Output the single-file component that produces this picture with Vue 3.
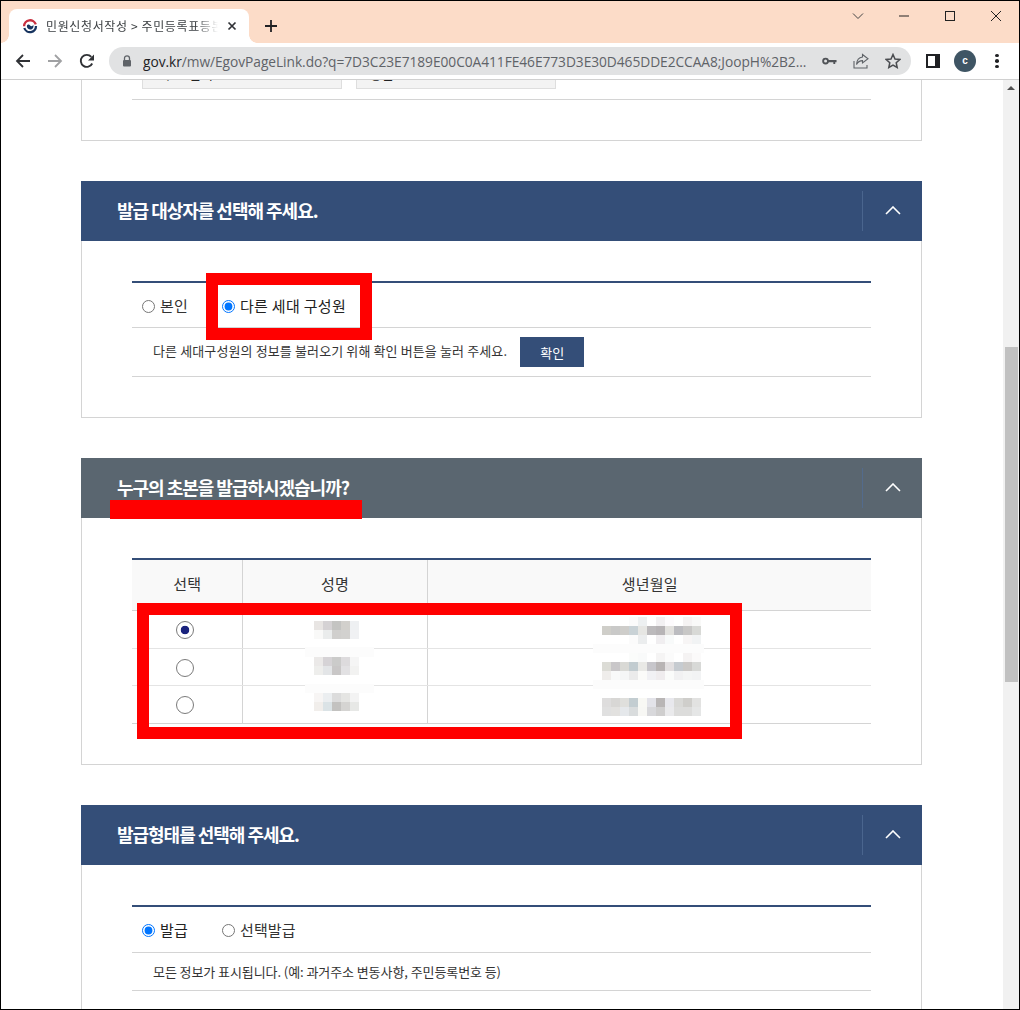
<script setup>
const rows = [
  { checked: true },
  { checked: false },
  { checked: false },
]

// Each mosaic: top-left position on the screen and its rows of 9px blocks
const mosaics = [
  { x: 314, y: 621, cols: 5, c: ['#e8e5e3','#d5d2d4','#c4c4c2','#d2d0cc','#eef0f2','#f9f9f8','#eaecec','#d0cfcd','#d2d1cf','#f0f1f3'] },
  { x: 314, y: 657, cols: 5, c: ['#ebe9e8','#d6d3d6','#cbcbca','#dddbdd','#f5f5f5','#eeeeec','#e3e5e7','#c9c7c7','#e2e1e3','#f2f2f1'] },
  { x: 314, y: 693, cols: 5, c: ['#f7f5f4','#ebeef0','#dcdcdc','#e5e5e3','#f3f3f3','#f1eeeb','#dbe3e6','#c3c2c0','#d5d4d2','#e7e8e6'] },
  { x: 602, y: 617, cols: 11, c: ['#fff','#fff','#fff','#fbfbfb','#edf0f1','#fff','#f2f0f2','#fdfbfd','#fff','#f5f3f3','#f9f9f8',
    '#cfcec9','#c9c9c8','#cecdca','#c9d2d6','#e6e6e3','#bcbabc','#b7b4b6','#e2e1de','#bcbcc0','#c8c7c6','#d8d9d6',
    '#fff','#fff','#fff','#fbfbfb','#ebedee','#fff','#f0eef0','#f8fafa','#fff','#f7f5f5','#f1f3f4'] },
  { x: 602, y: 653, cols: 11, c: ['#fff','#fff','#fff','#fbfcfb','#f9fafa','#fff','#f5f4f4','#fbfbfb','#fff','#f5f3f3','#fbfafa',
    '#dcdcd6','#c9c7c9','#d9d9d5','#c2ccd0','#e9e9e6','#c7c6cb','#b8b4b4','#e2dfe0','#c6cbd0','#cbc9c7','#d8d9d7',
    '#efedeb','#f8f9f9','#f5f6f6','#ebebeb','#fbfbf9','#f1f1f4','#efecee','#fafbfa','#f1f1f2','#f4f5f5','#f2f3f4'] },
  { x: 602, y: 698, cols: 11, c: ['#dedddd','#d8d7d5','#dfdfdc','#c3cdd1','#f8f8f4','#e3e3e9','#b9b6b6','#e8e8ed','#d9d9d7','#cfcecb','#e2e2e1',
    '#e0e0e0','#e2e1df','#e5e8eb','#d9dcdd','#f7f7f4','#d8d8db','#cfcece','#eaeaec','#dcdcdb','#dcdcdb','#e5e6e6'] },
]

const blockStyle = (m) => ({
  left: m.x + 'px',
  top: m.y + 'px',
  gridTemplateColumns: `repeat(${m.cols}, 9px)`,
})

const halos = [
  { x: 305, y: 647, w: 69, h: 10 },
  { x: 305, y: 684, w: 69, h: 9 },
  { x: 593, y: 644, w: 111, h: 9 },
  { x: 593, y: 680, w: 111, h: 9 },
]
</script>

<template>
  <div class="window">
    <!-- tab strip -->
    <header class="tabstrip">
      <div class="tab">
        <svg class="favicon" viewBox="0 0 16 16" width="16" height="16">
          <path d="M2.1 8.2A6 6 0 0 1 13.8 6.4" fill="none" stroke="#c8303f" stroke-width="2.3" />
          <path d="M14 8A6 6 0 0 1 2.3 10" fill="none" stroke="#17345f" stroke-width="2.3" />
          <path d="M5 7.3C6 6 7.4 6.8 8.4 7.8 9.4 8.7 11 8.2 11.2 6.8 12.2 9.6 10.2 11.8 8 11.6 5.8 11.4 4.4 9.2 5 7.3Z" fill="#17345f" />
        </svg>
        <span class="tab-title">민원신청서작성 &gt; 주민등록표등본</span>
        <svg class="tab-close" viewBox="0 0 10 10" width="10" height="10">
          <path d="M1.5 1.5l7 7M8.5 1.5l-7 7" stroke="#303236" stroke-width="1.7" fill="none" />
        </svg>
      </div>
      <svg class="newtab" viewBox="0 0 12 12" width="12" height="12">
        <path d="M6 0v12M0 6h12" stroke="#202124" stroke-width="1.8" />
      </svg>
      <div class="winctl">
        <span class="ctl">
          <svg viewBox="0 0 12 8" width="12" height="8"><path d="M1 1.5l5 5 5-5" fill="none" stroke="#444" stroke-width="1" /></svg>
        </span>
        <span class="ctl">
          <svg viewBox="0 0 12 12" width="12" height="12"><path d="M1 6h10" stroke="#222" stroke-width="1" /></svg>
        </span>
        <span class="ctl">
          <svg viewBox="0 0 12 12" width="12" height="12"><rect x="1.5" y="1.5" width="9" height="9" fill="none" stroke="#222" stroke-width="1" /></svg>
        </span>
        <span class="ctl">
          <svg viewBox="0 0 12 12" width="12" height="12"><path d="M1 1l10 10M11 1L1 11" stroke="#222" stroke-width="1" /></svg>
        </span>
      </div>
    </header>

    <!-- toolbar -->
    <nav class="toolbar">
      <span class="navbtn">
        <svg viewBox="0 0 16 16" width="16" height="16"><path d="M15 8H2M8 2L2 8l6 6" fill="none" stroke="#303236" stroke-width="1.8" /></svg>
      </span>
      <span class="navbtn">
        <svg viewBox="0 0 16 16" width="16" height="16"><path d="M1 8h13M8 2l6 6-6 6" fill="none" stroke="#a0a1a3" stroke-width="1.8" /></svg>
      </span>
      <span class="navbtn">
        <svg viewBox="0 0 16 16" width="16" height="16"><path d="M13.2 10.5A6 6 0 1 1 12.3 3.9" fill="none" stroke="#303236" stroke-width="1.9" /><path d="M15 1.4v6h-6z" fill="#303236" /></svg>
      </span>
      <div class="omnibox">
        <svg class="lock" viewBox="0 0 10 12" width="10" height="12">
          <path d="M2.5 5V3.3a2.5 2.5 0 0 1 5 0V5" fill="none" stroke="#5f6368" stroke-width="1.3" />
          <rect x="1" y="5" width="8" height="6.5" rx="1" fill="#5f6368" />
        </svg>
        <span class="url"><b>gov.kr</b>/mw/EgovPageLink.do?q=7D3C23E7189E00C0A411FE46E773D3E30D465DDE2CCAA8;JoopH%2B2...</span>
        <svg class="om-key" viewBox="0 0 16 10" width="15" height="10">
          <circle cx="3.8" cy="5" r="2.6" fill="none" stroke="#505357" stroke-width="2" />
          <path d="M6 4h9.5v2.2h-1.4v2h-2v-2H6z" fill="#505357" />
        </svg>
        <svg class="om-share" viewBox="0 0 16 16" width="16" height="16">
          <path d="M1 8v7h13v-3" fill="none" stroke="#5f6368" stroke-width="1.1" />
          <path d="M9.5 1.5l5.5 4.3-5.5 4.2V7.6C7 7.6 5 8.6 3.5 11.5 3.8 7.5 6 4.4 9.5 4z" fill="none" stroke="#5f6368" stroke-width="1.1" />
        </svg>
        <svg class="om-star" viewBox="0 0 16 16" width="16" height="16">
          <path d="M8 1.5l2 4.5 4.8.5-3.6 3.2 1 4.8L8 12.1l-4.2 2.4 1-4.8L1.2 6.5 6 6z" fill="none" stroke="#4a4c50" stroke-width="1.5" />
        </svg>
      </div>
      <svg class="sidepanel" viewBox="0 0 14 14" width="14" height="14">
        <rect x="0" y="0" width="14" height="14" fill="#202124" />
        <rect x="2" y="2" width="7" height="10" fill="#fff" />
      </svg>
      <span class="avatar">c</span>
      <span class="kebab"><i></i><i></i><i></i></span>
    </nav>

    <!-- page -->
    <div class="viewport">
      <main class="page">
        <section class="card card-cut">
          <div class="cut-row">
            <div class="cut-box"><span>주소 선택</span></div>
            <div class="cut-box cut-box-b"><span>등본</span></div>
          </div>
        </section>

        <section class="card">
          <div class="card-head">
            <h2>발급 대상자를 선택해 주세요.</h2>
            <button class="fold" aria-label="접기">
              <svg viewBox="0 0 16 9" width="16" height="9"><path d="M1 8l7-7 7 7" fill="none" stroke="#fff" stroke-width="1.6" /></svg>
            </button>
          </div>
          <div class="card-body">
            <div class="radio-row">
              <label class="opt opt-first"><input type="radio" name="who" />본인</label>
              <label class="opt opt-on"><input type="radio" name="who" checked />다른 세대 구성원</label>
            </div>
            <div class="note-row">
              <span class="note-up">다른 세대구성원의 정보를 불러오기 위해 확인 버튼을 눌러 주세요.</span>
              <button class="confirm">확인</button>
            </div>
          </div>
        </section>

        <section class="card">
          <div class="card-head card-head-gray">
            <h2>누구의 초본을 발급하시겠습니까?</h2>
            <button class="fold" aria-label="접기">
              <svg viewBox="0 0 16 9" width="16" height="9"><path d="M1 8l7-7 7 7" fill="none" stroke="#fff" stroke-width="1.6" /></svg>
            </button>
          </div>
          <div class="card-body">
            <table class="people">
              <colgroup>
                <col class="c1" /><col class="c2" /><col />
              </colgroup>
              <thead>
                <tr><th>선택</th><th>성명</th><th>생년월일</th></tr>
              </thead>
              <tbody>
                <tr v-for="(r, i) in rows" :key="i">
                  <td><span class="pick" :class="{ on: r.checked }"></span></td>
                  <td></td>
                  <td></td>
                </tr>
              </tbody>
            </table>
          </div>
        </section>

        <section class="card card-last">
          <div class="card-head">
            <h2>발급형태를 선택해 주세요.</h2>
            <button class="fold" aria-label="접기">
              <svg viewBox="0 0 16 9" width="16" height="9"><path d="M1 8l7-7 7 7" fill="none" stroke="#fff" stroke-width="1.6" /></svg>
            </button>
          </div>
          <div class="card-body">
            <div class="radio-row radio-row-low">
              <label class="opt opt-first opt-on"><input type="radio" name="kind" checked />발급</label>
              <label class="opt opt-gap"><input type="radio" name="kind" />선택발급</label>
            </div>
            <div class="note-row note-row-short">
              <span>모든 정보가 표시됩니다. (예: 과거주소 변동사항, 주민등록번호 등)</span>
            </div>
          </div>
        </section>
      </main>

      <div class="scrollbar">
        <span class="arrow"></span>
        <span class="thumb"></span>
      </div>
    </div>

    <!-- pixelated personal data -->
    <div v-for="(h, i) in halos" :key="'h' + i" class="halo"
      :style="{ left: h.x + 'px', top: h.y + 'px', width: h.w + 'px', height: h.h + 'px' }"></div>
    <div v-for="(m, i) in mosaics" :key="'m' + i" class="mosaic" :style="blockStyle(m)">
      <i v-for="(c, j) in m.c" :key="j" :style="{ background: c }"></i>
    </div>

    <!-- red annotations -->
    <div class="mark mark-a"></div>
    <div class="mark-line"></div>
    <div class="mark mark-b"></div>
  </div>
</template>

<style>
html, body { margin: 0; background: #fff; }
</style>

<style scoped>
.window {
  position: relative;
  width: 1020px;
  height: 1010px;
  overflow: hidden;
  box-sizing: border-box;
  border: 1px solid #000;
  background: #fff;
  font-family: "Noto Sans CJK KR", "Noto Sans", sans-serif;
  display: flex;
  flex-direction: column;
}
.tabstrip {
  height: 42px;
  flex: none;
  background: #fcdcc8;
  display: flex;
  align-items: flex-end;
  padding-left: 8px;
  position: relative;
}
.tab {
  width: 240px;
  height: 34px;
  background: #fff;
  border-radius: 8px 8px 0 0;
  display: flex;
  align-items: center;
  padding: 0 0 0 13px;
  box-sizing: border-box;
  position: relative;
}
.tab::before,
.tab::after {
  content: "";
  position: absolute;
  bottom: 0;
  width: 8px;
  height: 8px;
}
.tab::before {
  left: -8px;
  background: radial-gradient(circle at 0 0, #fcdcc8 7.5px, #fff 8px);
}
.tab::after {
  right: -8px;
  background: radial-gradient(circle at 100% 0, #fcdcc8 7.5px, #fff 8px);
}
.favicon { flex: none; margin-right: 8px; margin-top: -1px; }
.tab-title {
  font-size: 12px;
  color: #3c4043;
  width: 174px;
  flex: none;
  overflow: hidden;
  white-space: nowrap;
  margin-right: 7px;
  letter-spacing: 0.62px;
  margin-top: -2px;
  -webkit-mask-image: linear-gradient(to right, #000 150px, transparent 172px);
  mask-image: linear-gradient(to right, #000 150px, transparent 172px);
}
.tab-close { flex: none; margin-top: -1px; }
.newtab { margin: 0 0 11px 16px; }
.winctl {
  margin-left: auto;
  align-self: flex-start;
  display: flex;
}
.ctl {
  width: 46px;
  height: 30px;
  display: flex;
  align-items: center;
  justify-content: center;
}
.toolbar {
  height: 36px;
  flex: none;
  background: #fff;
  border-bottom: 1px solid #d0d0d0;
  display: flex;
  align-items: center;
  padding-left: 6px;
  box-sizing: content-box;
}
.navbtn {
  width: 32px;
  height: 28px;
  display: flex;
  align-items: center;
  justify-content: center;
}
.omnibox {
  margin-left: 6px;
  width: 802px;
  height: 28px;
  border-radius: 14px;
  background: #e1e2e3;
  display: flex;
  align-items: center;
  padding-left: 13px;
  box-sizing: border-box;
  flex: none;
}
.lock { flex: none; margin-right: 11px; }
.url {
  font-family: "Open Sans", sans-serif;
  font-size: 13.75px;
  color: #5f6368;
  white-space: nowrap;
  width: 666px;
  flex: none;
  overflow: hidden;
  letter-spacing: -0.05px;
}
.url b { color: #202124; font-weight: 400; }
.om-key { flex: none; margin-left: 13px; }
.om-share { flex: none; margin-left: 16px; }
.om-star { flex: none; margin-left: 16px; }
.sidepanel { flex: none; margin-left: 15px; }
.avatar {
  flex: none;
  margin-left: 14px;
  width: 22px;
  height: 22px;
  border-radius: 50%;
  background: #3f5564;
  color: #fff;
  font: 700 10px/22px "Liberation Sans", sans-serif;
  text-align: center;
}
.kebab {
  flex: none;
  margin-left: 19px;
  width: 4px;
  display: flex;
  flex-direction: column;
  gap: 2px;
}
.kebab i {
  width: 4px;
  height: 3.4px;
  border-radius: 50%;
  background: #202124;
}

.viewport {
  flex: 1;
  min-height: 0;
  display: flex;
  overflow: hidden;
}
.page {
  flex: none;
  width: 1002px;
  padding: 0 81px 0 80px;
  box-sizing: border-box;
  display: flex;
  flex-direction: column;
  gap: 40px;
}
.card {
  border: 1px solid #d4d4d4;
  border-top: 0;
  flex: none;
}
.card-cut {
  height: 61px;
  padding: 0 50px;
  box-sizing: border-box;
}
.cut-row {
  height: 19px;
  border-bottom: 1px solid #d4d4d4;
  padding-left: 10px;
  display: flex;
  gap: 14px;
}
.cut-box {
  width: 200px;
  height: 9px;
  box-sizing: border-box;
  background: #f3f3f3;
  border: 1px solid #dedede;
  border-top: 0;
  overflow: hidden;
  display: flex;
  align-items: flex-end;
  padding-left: 19px;
}
.cut-box-b { padding-left: 13px; }
.cut-box span {
  font-size: 13px;
  line-height: 18px;
  color: #222;
  margin-bottom: 5px;
  white-space: nowrap;
}
.card-head {
  height: 60px;
  margin: 0 -1px;
  background: #344e78;
  display: flex;
  align-items: center;
  padding-left: 36px;
  position: relative;
  flex: none;
}
.card-head-gray { background: #5a6670; }
.card-head h2 {
  margin: 0;
  font-size: 18px;
  font-weight: 700;
  color: #fff;
  letter-spacing: -1.02px;
  line-height: 24px;
  margin-top: -2px;
}
.fold {
  margin-left: auto;
  width: 60px;
  height: 40px;
  border: 0;
  border-left: 1px solid rgba(82, 110, 150, 0.75);
  background: none;
  padding: 0;
  display: flex;
  align-items: center;
  justify-content: center;
}
.fold svg { margin-top: -1px; }
.card-body {
  padding: 40px 50px;
}
.radio-row {
  border-top: 2px solid #344e78;
  height: 42px;
  padding-top: 2px;
  border-bottom: 1px solid #d4d4d4;
  display: flex;
  align-items: center;
  padding-left: 10px;
  box-sizing: content-box;
}
.opt {
  display: flex;
  align-items: center;
  font-size: 15px;
  color: #333;
  line-height: 20px;
  letter-spacing: 0.1px;
}
.opt input {
  margin: 0 5px 0 0;
  width: 13px;
  height: 13px;
  flex: none;
}
.opt-first { width: 80px; }
.opt-on { color: #222; font-weight: 400; letter-spacing: 0.3px; }
.note-row {
  height: 48px;
  border-bottom: 1px solid #d4d4d4;
  display: flex;
  align-items: center;
  padding-left: 21px;
  font-size: 13px;
  color: #333;
  letter-spacing: 0.12px;
}
.note-up { margin-bottom: 4px; }
.note-row-short { height: 37px; letter-spacing: -0.08px; }
.confirm {
  margin-left: 13px;
  width: 64px;
  height: 30px;
  background: #344e78;
  border: 0;
  color: #fff;
  font: 400 13px "Noto Sans CJK KR", sans-serif;
  padding: 0;
}
.people {
  width: 100%;
  border-collapse: collapse;
  table-layout: fixed;
  border-top: 2px solid #344e78;
}
.c1 { width: 110px; }
.c2 { width: 185px; }
.people th {
  height: 46px;
  padding: 0 0 4px 1px;
  background: #f9f9f9;
  font-size: 15px;
  font-weight: 400;
  color: #333;
  border-bottom: 1px solid #d4d4d4;
  border-right: 1px solid #d4d4d4;
  letter-spacing: 0.2px;
}
.people th:last-child, .people td:last-child { border-right: 0; }
.people td {
  height: 36.67px;
  padding: 0;
  text-align: center;
  border-bottom: 1px solid #e4e4e4;
  border-right: 1px solid #d4d4d4;
}
.people td:first-child { padding-right: 3px; }
.people tbody tr:last-child td { border-bottom-color: #d4d4d4; }
.pick {
  display: inline-block;
  box-sizing: border-box;
  width: 18px;
  height: 18px;
  border-radius: 50%;
  border: 1px solid #7a7a7a;
  background: #fff;
  vertical-align: middle;
  position: relative;
  top: -2px;
}
.pick.on {
  background: radial-gradient(circle, #1a237e 0 4px, #fff 4.6px);
}
.radio-row-low { height: 43px; }
.opt-gap { margin-left: 0; }

.scrollbar {
  flex: 1;
  background: #f1f1f1;
  position: relative;
}
.arrow {
  position: absolute;
  left: 4px;
  top: 6px;
  border: 4px solid transparent;
  border-top: 0;
  border-bottom: 4px solid #505050;
}
.thumb {
  position: absolute;
  left: 2px;
  right: 1px;
  top: 267px;
  height: 335px;
  background: #c1c1c1;
}

.halo { position: absolute; background: #fcfcfc; margin: -1px 0 0 -1px; }
.mosaic {
  position: absolute;
  display: grid;
  grid-auto-rows: 9px;
  margin: -1px 0 0 -1px;
}
.mark {
  position: absolute;
  box-sizing: border-box;
  border: 12px solid #f00;
  margin: -1px 0 0 -1px;
}
.mark-a { left: 206px; top: 273px; width: 166px; height: 67px; }
.mark-b { left: 137px; top: 603px; width: 605px; height: 136px; }
.mark-line {
  position: absolute;
  left: 109px;
  top: 499px;
  width: 252px;
  height: 19px;
  background: #f00;
}
</style>
